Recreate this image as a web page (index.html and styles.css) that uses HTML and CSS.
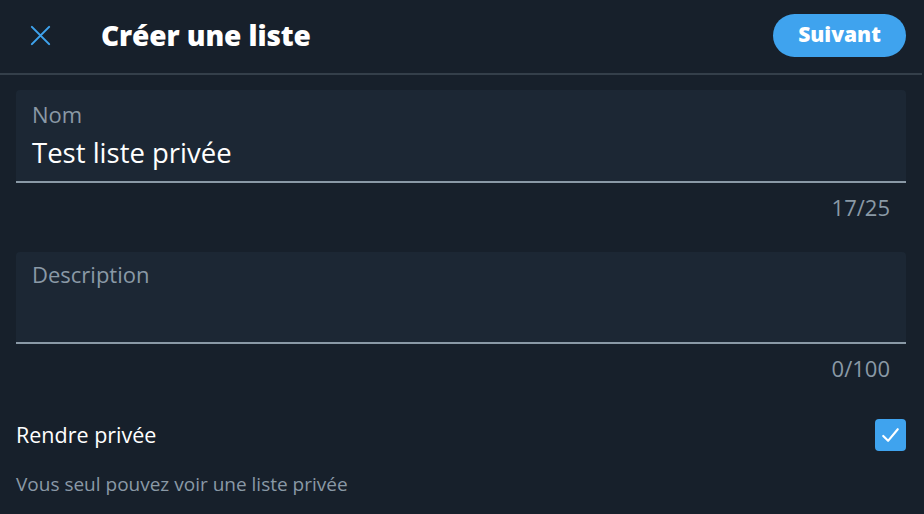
FILE: index.html
```html
<!DOCTYPE html>
<html lang="fr">
<head>
<meta charset="utf-8">
<title>Créer une liste</title>
<link rel="stylesheet" href="styles.css">
</head>
<body>
<div class="modal">
  <header class="topbar">
    <div class="left">
      <button class="close" aria-label="Fermer">
        <svg viewBox="0 0 24 24" width="24" height="24"><path d="M3 3 L21 21 M21 3 L3 21" stroke="#3fa3ee" stroke-width="2.2" stroke-linecap="round" fill="none"/></svg>
      </button>
      <h1 class="title">Créer une liste</h1>
    </div>
    <button class="next">Suivant</button>
  </header>
  <main class="body">
    <div class="field">
      <div class="box">
        <span class="label">Nom</span>
        <span class="value">Test liste privée</span>
      </div>
      <div class="count">17/25</div>
    </div>
    <div class="field">
      <div class="box tall">
        <span class="label">Description</span>
      </div>
      <div class="count">0/100</div>
    </div>
    <div class="private">
      <div class="row">
        <span class="rlabel">Rendre privée</span>
        <span class="check">
          <svg viewBox="0 0 32 32" width="31" height="31"><path d="M8.5 16.5 L13.5 21.5 L23.5 9.5" stroke="#fff" stroke-width="2.2" fill="none" stroke-linecap="round" stroke-linejoin="round"/></svg>
        </span>
      </div>
      <p class="hint">Vous seul pouvez voir une liste privée</p>
    </div>
  </main>
</div>
</body>
</html>
```
FILE: styles.css
```css
* { box-sizing: border-box; }
html, body { margin: 0; padding: 0; }
body {
  background: #17202b;
  font-family: "Open Sans", "Noto Sans", sans-serif;
  color: #ffffff;
  width: 924px;
  height: 514px;
  overflow: hidden;
}
.modal {
  width: 922px;
  height: 512px;
  background: #17202b;
}
.topbar {
  height: 75px;
  border-bottom: 2px solid #343f4a;
  display: flex;
  align-items: center;
  justify-content: space-between;
  padding: 0 16px 3px 16px;
}
.left { display: flex; align-items: center; }
.close {
  background: none;
  border: 0;
  padding: 0;
  width: 48px;
  height: 48px;
  display: flex;
  align-items: center;
  justify-content: center;
  margin-right: 37px;
}
.close svg { width: 23px; height: 23px; }
.title {
  margin: 0;
  font-size: 28px;
  line-height: 36px;
  font-weight: 800;
  letter-spacing: -0.1px;
  color: #ffffff;
}
.next {
  width: 133px;
  height: 43px;
  border: 0;
  border-radius: 22px;
  background: #3fa3ee;
  color: #ffffff;
  font-family: "Open Sans", "Noto Sans", sans-serif;
  font-weight: 800;
  font-size: 21px;
  line-height: 28px;
  padding: 0 0 2px 0;
}
.body { padding: 15px 16px 0 16px; }
.field { margin-bottom: 31px; }
.box {
  height: 93px;
  background: #1c2734;
  border-radius: 4px 4px 0 0;
  border-bottom: 2px solid #8a99a6;
  padding: 10px 16px 0 16px;
  display: flex;
  flex-direction: column;
}
.box.tall { height: 92px; padding-top: 8px; }
.label {
  font-size: 22px;
  color: #8a99a6;
  line-height: 28px;
}
.value {
  font-size: 27.5px;
  line-height: 36px;
  margin-top: 7px;
  color: #ffffff;
}
.count {
  text-align: right;
  padding-right: 16px;
  font-size: 22px;
  color: #8a99a6;
  line-height: 28px;
  margin-top: 10px;
}
.field + .private { margin-top: 36px; }
.row {
  display: flex;
  align-items: center;
  justify-content: space-between;
  height: 34px;
}
.rlabel { font-size: 21.5px; line-height: 28px; color: #ffffff; }
.check {
  width: 31px;
  height: 32px;
  background: #3fa3ee;
  border-radius: 4px;
  display: flex;
  align-items: center;
  justify-content: center;
}
.hint {
  margin: 19px 0 0 0;
  font-size: 19px;
  line-height: 26px;
  color: #8a99a6;
}
```
